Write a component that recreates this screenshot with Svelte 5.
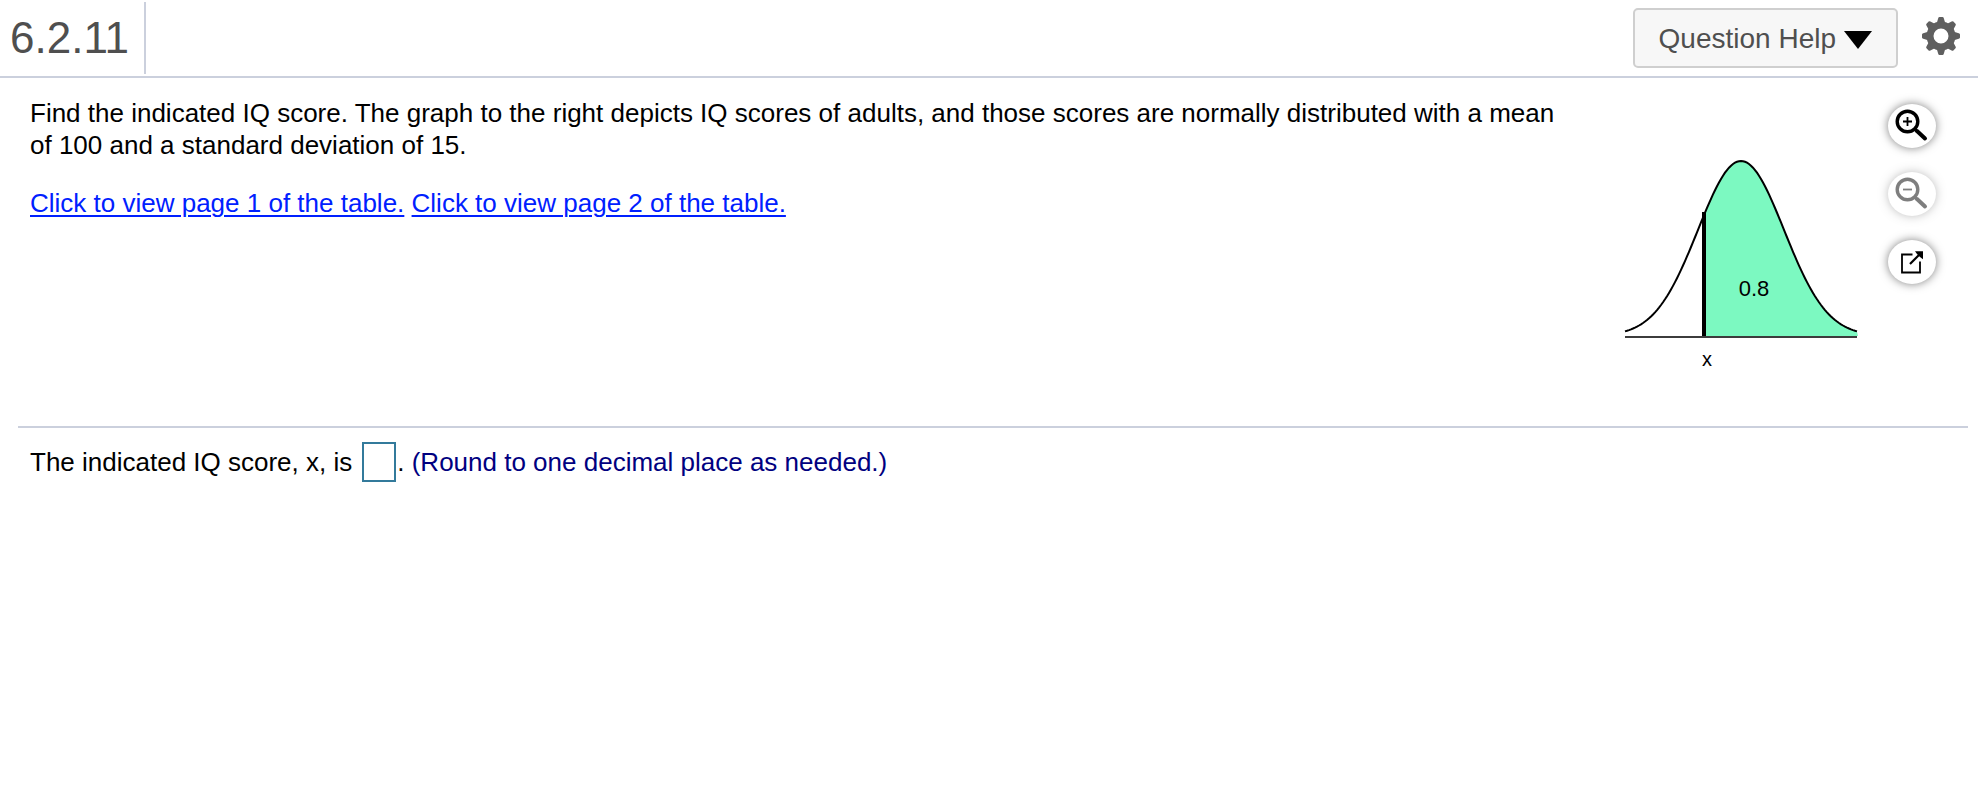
<script>
	const mean = 118;
	const sd = 43;
	const base = 201;
	const height = 175;
	const cutoff = 82;

	let answer = '';

	// points of the bell curve between two x values
	function curve(from, to) {
		const points = [];
		for (let x = from; x <= to; x += 2) {
			const y = base - height * Math.exp(-((x - mean) ** 2) / (2 * sd ** 2));
			points.push(`${x},${y.toFixed(2)}`);
		}
		return points.join(' ');
	}

	const outline = curve(2, 234);
	const area = `${cutoff},${base} ${curve(cutoff, 234)} 235,${base}`;
	const teeth = [0, 45, 90, 135, 180, 225, 270, 315];
</script>

<header>
	<h1>6.2.11</h1>
	<div class="tools">
		<button type="button" class="help">
			Question Help
			<svg width="28" height="18" viewBox="0 0 28 18" aria-hidden="true">
				<path d="M0 0h28L14 18z" />
			</svg>
		</button>
		<button type="button" class="settings" aria-label="Settings">
			<svg width="40" height="40" viewBox="-20 -20 40 40" fill="#5f5f5f">
				{#each teeth as angle}
					<path
						d="M-4.5 -12L-2.8 -17.8Q-2.5 -19 -1.5 -19H1.5Q2.5 -19 2.8 -17.8L4.5 -12z"
						transform="rotate({angle})"
					/>
				{/each}
				<circle r="11" fill="none" stroke="#5f5f5f" stroke-width="7" />
			</svg>
		</button>
	</div>
</header>

<main>
	<section class="question">
		<div class="text">
			<p>
				Find the indicated IQ score. The graph to the right depicts IQ scores of adults, and those
				scores are normally distributed with a mean of 100 and a standard deviation of 15.
			</p>
			<p>
				<a href="#page1">Click to view page 1 of the table.</a>
				<a href="#page2">Click to view page 2 of the table.</a>
			</p>
		</div>
		<svg class="graph" width="236" height="240" viewBox="0 0 236 240">
			<polygon points={area} fill="#7cf9c1" />
			<polyline points={outline} fill="none" stroke="#000" stroke-width="2" />
			<path d="M2 202H234" stroke="#3c3c3c" stroke-width="2" />
			<path d="M81 77V201" stroke="#000" stroke-width="4" />
			<text x="131" y="161" text-anchor="middle">0.8</text>
			<text x="84" y="231" text-anchor="middle" class="axis">x</text>
		</svg>
		<div class="zoom">
			<button type="button" aria-label="Zoom in">
				<svg viewBox="0 0 48 44" fill="none" stroke="#000">
					<circle cx="19.5" cy="17.5" r="10.3" stroke-width="3.4" />
					<path d="M27 25.5L29 27.5" stroke-width="3" />
					<path d="M29 27L37 34.5" stroke-width="4" stroke-linecap="round" />
					<path d="M15 17.5h9M19.5 13v9" stroke-width="1.8" />
				</svg>
			</button>
			<button type="button" aria-label="Zoom out" disabled>
				<svg viewBox="0 0 48 44" fill="none" stroke="#000">
					<circle cx="19.5" cy="17.5" r="10.3" stroke-width="3.4" />
					<path d="M27 25.5L29 27.5" stroke-width="3" />
					<path d="M29 27L37 34.5" stroke-width="4" stroke-linecap="round" />
					<path d="M15 17.5h9" stroke-width="1.8" />
				</svg>
			</button>
			<button type="button" aria-label="Open in new window">
				<svg viewBox="0 0 48 44" fill="none" stroke="#000" stroke-width="1.8">
					<path d="M24.5 14.5H14V32.5H32V21.5" />
					<path d="M22 24L32 14" stroke-width="2.2" />
					<path d="M27 11.3H35V19.3L32 17L29 14z" fill="#000" stroke="none" />
				</svg>
			</button>
		</div>
	</section>

	<section class="answer">
		<label for="score">The indicated IQ score, x, is</label>
		<input id="score" type="text" bind:value={answer} />
		<span>. <em>(Round to one decimal place as needed.)</em></span>
	</section>
</main>

<style>
	:global(body) {
		background: #fff;
		color: #000;
		font-family: Arial, 'Liberation Sans', sans-serif;
		font-size: 26px;
		line-height: 32px;
	}
	header {
		display: flex;
		align-items: center;
		justify-content: space-between;
		height: 76px;
		border-bottom: 2px solid #cbd0dd;
	}
	h1 {
		margin: 0;
		padding: 0 15px 0 10px;
		border-right: 2px solid #cbd0dd;
		color: #4f4f4f;
		font-size: 44px;
		font-weight: normal;
		line-height: 72px;
	}
	.tools {
		display: flex;
		align-items: center;
		gap: 23px;
		padding-right: 17px;
	}
	button {
		padding: 0;
		border: none;
		background: none;
		font-family: inherit;
		cursor: pointer;
	}
	button svg {
		display: block;
	}
	.help {
		display: flex;
		align-items: center;
		gap: 8px;
		height: 60px;
		padding: 2px 24px 0;
		border: 2px solid #cfcfcf;
		border-radius: 5px;
		background: #f7f7f7;
		color: #4f4f4f;
		font-size: 28px;
	}
	.help svg {
		margin-top: 2px;
	}
	.settings {
		padding-bottom: 4px;
	}
	main {
		padding: 0 10px 0 18px;
	}
	.question {
		display: flex;
		align-items: flex-start;
		padding: 19px 32px 51px 12px;
		border-bottom: 2px solid #cbd0dd;
	}
	.text {
		flex: 1;
	}
	p {
		margin: 0 0 26px;
	}
	a {
		color: #0020ff;
		text-decoration-thickness: 2px;
		text-underline-offset: 3px;
	}
	.graph {
		flex: none;
		margin: 38px 29px 0 48px;
	}
	.graph text {
		font-size: 22px;
	}
	.graph .axis {
		font-size: 20px;
	}
	.zoom {
		display: flex;
		flex-direction: column;
		gap: 24px;
		padding-top: 7px;
	}
	.zoom button {
		width: 48px;
		height: 44px;
		border-radius: 50%;
		background: #fff;
		box-shadow: 0 0 10px rgba(0, 0, 0, 0.5);
	}
	.zoom button:disabled {
		opacity: 0.5;
		cursor: default;
	}
	.answer {
		display: flex;
		align-items: center;
		padding: 14px 12px;
	}
	input {
		box-sizing: border-box;
		width: 34px;
		height: 40px;
		margin: 0 1px 0 10px;
		padding: 0 4px;
		border: 2px solid #337a9b;
		border-radius: 0;
		font: inherit;
	}
	em {
		color: #000080;
		font-style: normal;
	}
</style>
